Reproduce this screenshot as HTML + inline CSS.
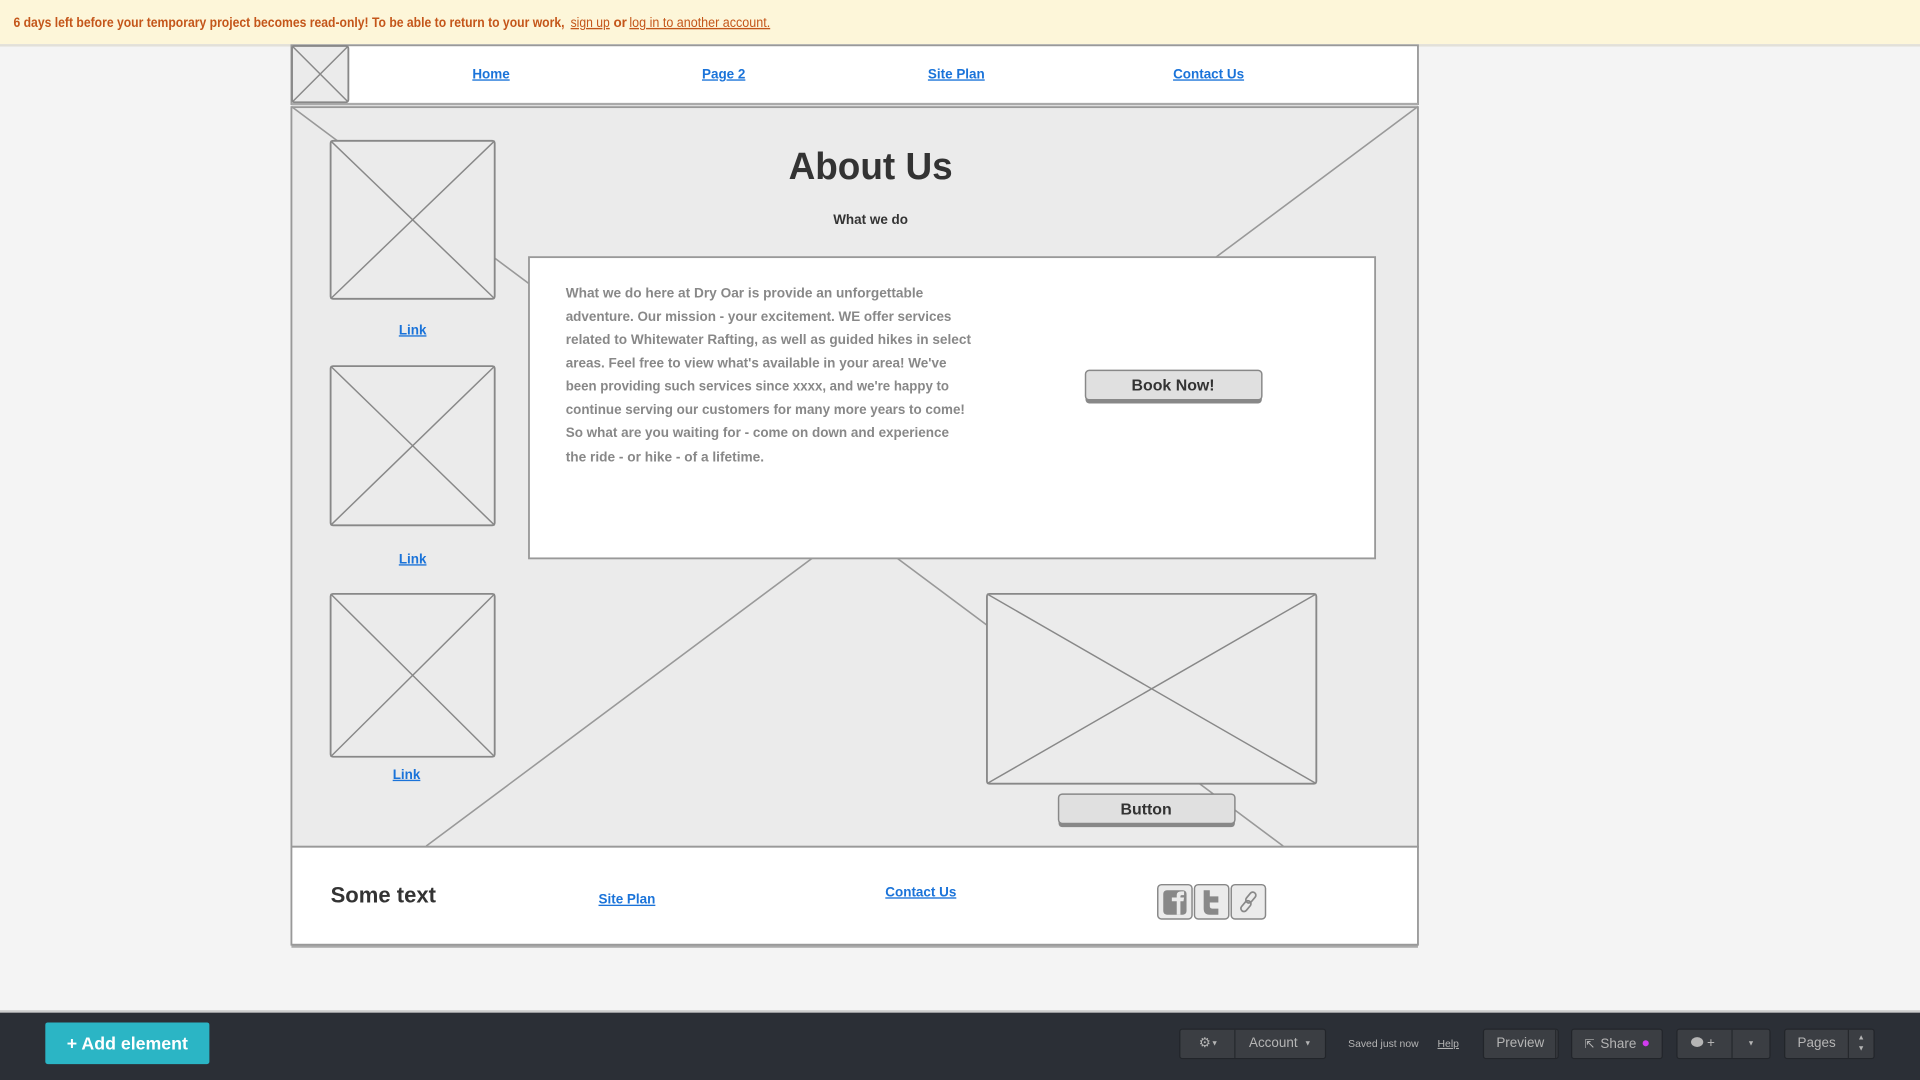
<!DOCTYPE html>
<html><head><meta charset="utf-8"><style>
html,body{margin:0;padding:0;background:#f4f4f4;overflow:hidden}
svg{display:block}
text{font-family:"Liberation Sans",sans-serif}
</style></head><body>
<svg width="1920" height="1080" viewBox="0 0 1568 882" xmlns="http://www.w3.org/2000/svg">
<rect x="0" y="0" width="1568" height="882" fill="#f4f4f4"/>
<!-- banner -->
<rect x="0" y="0" width="1568" height="36" fill="#fdf6d9"/>
<rect x="0" y="36" width="1568" height="2" fill="#e2e0d8"/>
<text x="11" y="22" font-size="11" font-weight="bold" fill="#c4561a" textLength="450" lengthAdjust="spacingAndGlyphs">6 days left before your temporary project becomes read-only! To be able to return to your work,</text>
<text x="466" y="22" font-size="11" fill="#c4561a" text-decoration="underline" textLength="32" lengthAdjust="spacingAndGlyphs">sign up</text>
<text x="501" y="22" font-size="11" font-weight="bold" fill="#c4561a">or</text>
<text x="514" y="22" font-size="11" fill="#c4561a" text-decoration="underline" textLength="115" lengthAdjust="spacingAndGlyphs">log in to another account.</text>

<!-- nav -->
<rect x="238" y="37" width="920" height="48" fill="#fff" stroke="#999" stroke-width="1.5"/>
<rect x="238" y="84" width="920" height="2" fill="#aaa"/>
<rect x="238.5" y="37.5" width="46" height="46" rx="2" fill="#ebebeb" stroke="#888" stroke-width="1.5"/>
<line x1="239" y1="38" x2="284" y2="83" stroke="#888" stroke-width="1.2"/>
<line x1="284" y1="38" x2="239" y2="83" stroke="#888" stroke-width="1.2"/>
<g font-size="11" font-weight="bold" fill="#1a73d9" text-anchor="middle" text-decoration="underline">
<text x="401" y="64">Home</text>
<text x="591" y="64">Page 2</text>
<text x="781" y="64">Site Plan</text>
<text x="987" y="64">Contact Us</text>
</g>

<!-- main -->
<rect x="238" y="87.5" width="920" height="604" fill="#ebebeb" stroke="#999" stroke-width="1.5"/>
<line x1="238" y1="87" x2="1048" y2="691" stroke="#999" stroke-width="1.3"/>
<line x1="1158" y1="87" x2="348" y2="691" stroke="#999" stroke-width="1.3"/>

<g fill="#ebebeb" stroke="#888" stroke-width="1.5">
<rect x="270" y="115" width="134" height="129" rx="2"/>
<rect x="270" y="299" width="134" height="130" rx="2"/>
<rect x="270" y="485" width="134" height="133" rx="2"/>
</g>
<g stroke="#888" stroke-width="1.2">
<line x1="270" y1="115" x2="404" y2="244"/><line x1="404" y1="115" x2="270" y2="244"/>
<line x1="270" y1="299" x2="404" y2="429"/><line x1="404" y1="299" x2="270" y2="429"/>
<line x1="270" y1="485" x2="404" y2="618"/><line x1="404" y1="485" x2="270" y2="618"/>
</g>
<g font-size="11" font-weight="bold" fill="#1a73d9" text-anchor="middle" text-decoration="underline">
<text x="337" y="273">Link</text>
<text x="337" y="460">Link</text>
<text x="332" y="636">Link</text>
</g>

<text x="711" y="146" font-size="31" font-weight="bold" fill="#333" text-anchor="middle" textLength="134" lengthAdjust="spacingAndGlyphs">About Us</text>
<text x="711" y="183" font-size="11" font-weight="bold" fill="#333" text-anchor="middle">What we do</text>

<rect x="432" y="210" width="691" height="246" fill="#fff" stroke="#999" stroke-width="1.5"/>
<g font-size="11.5" font-weight="bold" fill="#888" lengthAdjust="spacingAndGlyphs">
<text x="462" y="243" textLength="292" lengthAdjust="spacingAndGlyphs">What we do here at Dry Oar is provide an unforgettable</text>
<text x="462" y="262" textLength="315" lengthAdjust="spacingAndGlyphs">adventure. Our mission - your excitement. WE offer services</text>
<text x="462" y="281" textLength="331" lengthAdjust="spacingAndGlyphs">related to Whitewater Rafting, as well as guided hikes in select</text>
<text x="462" y="300" textLength="311" lengthAdjust="spacingAndGlyphs">areas. Feel free to view what's available in your area! We've</text>
<text x="462" y="319" textLength="313" lengthAdjust="spacingAndGlyphs">been providing such services since xxxx, and we're happy to</text>
<text x="462" y="338" textLength="326" lengthAdjust="spacingAndGlyphs">continue serving our customers for many more years to come!</text>
<text x="462" y="357" textLength="313" lengthAdjust="spacingAndGlyphs">So what are you waiting for - come on down and experience</text>
<text x="462" y="377" textLength="162" lengthAdjust="spacingAndGlyphs">the ride - or hike - of a lifetime.</text>
</g>

<rect x="886.5" y="304.5" width="144" height="25" rx="3" fill="#888"/>
<rect x="886.5" y="302.5" width="144" height="24" rx="3" fill="#e0e0e0" stroke="#888" stroke-width="1.2"/>
<text x="958" y="319" font-size="13" font-weight="bold" fill="#333" text-anchor="middle">Book Now!</text>

<rect x="806" y="485" width="269" height="155" rx="2" fill="#ebebeb" stroke="#888" stroke-width="1.5"/>
<line x1="806" y1="485" x2="1075" y2="640" stroke="#888" stroke-width="1.2"/>
<line x1="1075" y1="485" x2="806" y2="640" stroke="#888" stroke-width="1.2"/>

<rect x="864.5" y="650.5" width="144" height="25" rx="3" fill="#888"/>
<rect x="864.5" y="648.5" width="144" height="24" rx="3" fill="#e0e0e0" stroke="#888" stroke-width="1.2"/>
<text x="936" y="665" font-size="13" font-weight="bold" fill="#333" text-anchor="middle">Button</text>

<!-- footer -->
<rect x="238" y="771" width="920" height="3" fill="#aaa"/>
<rect x="238" y="691.5" width="920" height="80" fill="#fff" stroke="#999" stroke-width="1.5"/>
<text x="270" y="737" font-size="18" font-weight="bold" fill="#333" textLength="86" lengthAdjust="spacingAndGlyphs">Some text</text>
<text x="512" y="738" font-size="11" font-weight="bold" fill="#1a73d9" text-anchor="middle" text-decoration="underline">Site Plan</text>
<text x="752" y="732" font-size="11" font-weight="bold" fill="#1a73d9" text-anchor="middle" text-decoration="underline">Contact Us</text>
<g fill="#ebebeb" stroke="#888" stroke-width="1.2">
<rect x="945.5" y="722.5" width="28" height="28" rx="3"/>
<rect x="975.5" y="722.5" width="28" height="28" rx="3"/>
<rect x="1005.5" y="722.5" width="28" height="28" rx="3"/>
</g>
<rect x="950" y="727" width="19" height="20" rx="3" fill="#888"/>
<path d="M961 747 V736 H957 V733 H961 V731 Q961 728 965 728 H967 V731 H965 Q964 731 964 732 V733 H967 L966.5 736 H964 V747 Z" fill="#ebebeb"/>
<path d="M983 727 H988 V732 H995 V737 H988 V740 Q988 742 990 742 H995 V747 H988 Q983 747 983 742 Z" fill="#888"/>
<g fill="none" stroke="#888" stroke-width="1.4">
<rect x="1015" y="735" width="5" height="10" rx="2.5" transform="rotate(40 1017.5 740)"/>
<rect x="1019" y="728" width="5" height="10" rx="2.5" transform="rotate(40 1021.5 733)"/>
</g>

<!-- bottom bar -->
<rect x="0" y="825" width="1568" height="2" fill="#ccc"/>
<rect x="0" y="827" width="1568" height="55" fill="#2b2f36"/>
<rect x="37" y="835" width="134" height="34" rx="2" fill="#2bb5c5"/>
<text x="104" y="857" font-size="14.5" font-weight="bold" fill="#fff" text-anchor="middle">+ Add element</text>
<g fill="#3b3e43" stroke="#22252a" stroke-width="1">
<rect x="963.5" y="840.5" width="119" height="24" rx="2"/>
<rect x="1211.5" y="840.5" width="61" height="24" rx="2"/>
<rect x="1283.5" y="840.5" width="74" height="24" rx="2"/>
<rect x="1369.5" y="840.5" width="76" height="24" rx="2"/>
<rect x="1457.5" y="840.5" width="73" height="24" rx="2"/>
</g>
<g stroke="#25282c" stroke-width="1">
<line x1="1008.5" y1="841" x2="1008.5" y2="864"/>
<line x1="1414.5" y1="841" x2="1414.5" y2="864"/>
<line x1="1509.5" y1="841" x2="1509.5" y2="864"/>
<line x1="1270.5" y1="841" x2="1270.5" y2="864"/>
</g>
<g font-size="11" fill="#b5b5b5">
<text x="979" y="855" font-size="11">⚙</text>
<text x="989" y="854" font-size="6">▼</text>
<text x="1020" y="855">Account</text>
<text x="1065" y="854" font-size="6">▼</text>
<text x="1101" y="855" font-size="8.5">Saved just now</text>
<text x="1174" y="855" font-size="8.5" text-decoration="underline">Help</text>
<text x="1222" y="855">Preview</text>
<text x="1294" y="856" font-size="10">⇱</text>
<text x="1307" y="856">Share</text>
<circle cx="1344" cy="852" r="2.5" fill="#d23cf0"/>
<ellipse cx="1386" cy="851" rx="5" ry="4" fill="#b5b5b5"/>
<text x="1394" y="855">+</text>
<text x="1427" y="854" font-size="6">▼</text>
<text x="1468" y="855">Pages</text>
<text x="1517" y="849" font-size="6">▲</text>
<text x="1517" y="858" font-size="6">▼</text>
</g>
</svg>
</body></html>
